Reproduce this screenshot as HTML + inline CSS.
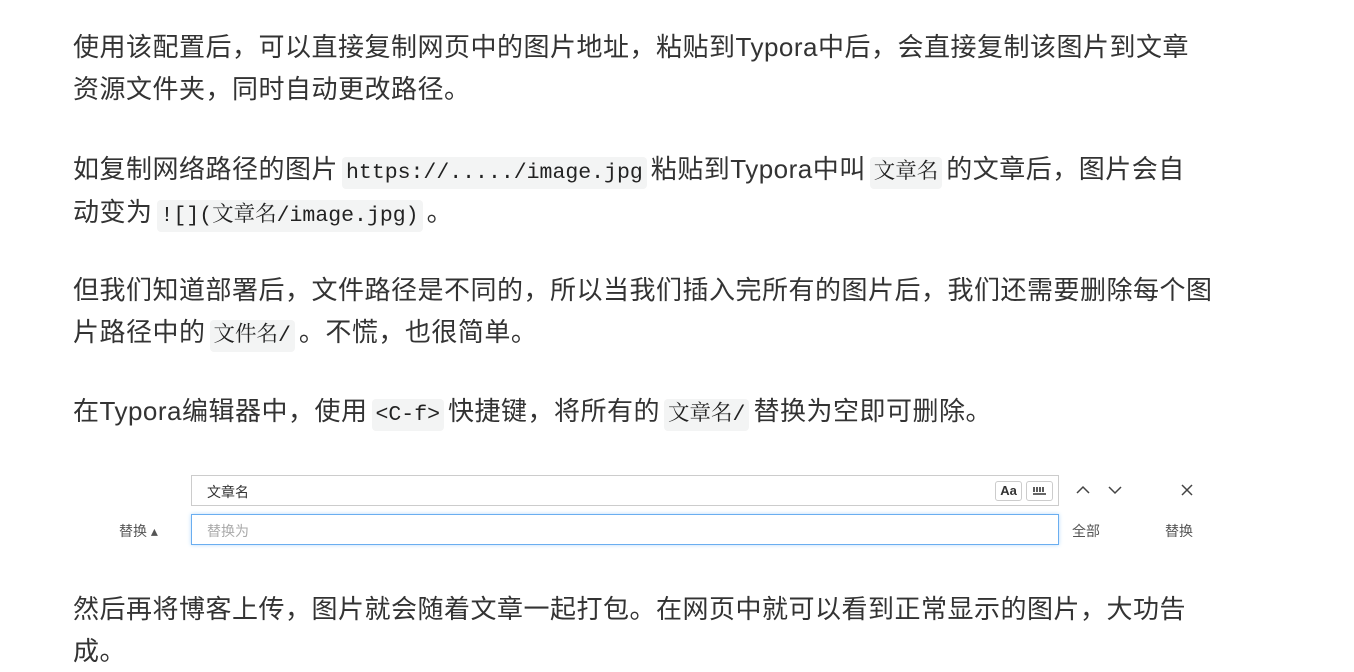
<!DOCTYPE html>
<html><head><meta charset="utf-8">
<style>
body{margin:0;background:#fff;width:1354px;height:656px;overflow:hidden;position:relative;
font-family:"Liberation Sans","Noto Sans CJK SC",sans-serif;color:#333;}
.l{position:absolute;left:73px;font-size:26px;white-space:nowrap;line-height:42px;letter-spacing:0.5px}
code{font-family:"Liberation Mono","Noto Serif CJK SC",monospace;font-size:21.5px;background:#f3f4f4;border-radius:4px;padding:4px 4px;color:#222;letter-spacing:0;margin:0 4px}
.s{position:absolute;font-size:14px;color:#555;white-space:nowrap}
.box{position:absolute;left:191px;width:866px;height:29px;border:1px solid #ccc;background:#fff}
.ic{position:absolute;top:5px;width:25px;height:18px;border:1px solid #ccc;border-radius:3px;font-size:13px;text-align:center;line-height:18px;color:#333;font-weight:bold}
</style></head><body>
<div class="l" style="top:26px">使用该配置后，可以直接复制网页中的图片地址，粘贴到Typora中后，会直接复制该图片到文章</div>
<div class="l" style="top:68px">资源文件夹，同时自动更改路径。</div>
<div class="l" style="top:148px">如复制网络路径的图片<code>https://...../image.jpg</code>粘贴到Typora中叫<code>文章名</code>的文章后，图片会自</div>
<div class="l" style="top:191px">动变为<code>![](文章名/image.jpg)</code>。</div>
<div class="l" style="top:269px">但我们知道部署后，文件路径是不同的，所以当我们插入完所有的图片后，我们还需要删除每个图</div>
<div class="l" style="top:311px">片路径中的<code>文件名/</code>。不慌，也很简单。</div>
<div class="l" style="top:390px">在Typora编辑器中，使用<code>&lt;C-f&gt;</code>快捷键，将所有的<code>文章名/</code>替换为空即可删除。</div>

<div class="box" style="top:475px"><span class="s" style="left:15px;top:6px;color:#333">文章名</span>
<div class="ic" style="left:803px">Aa</div>
<div class="ic" style="left:834px"><svg width="25" height="18"><path d="M7 5v5M10 5v5M13 5v5M16 5v5M6 12h13" stroke="#333" stroke-width="1.6" fill="none"/></svg></div></div>
<div class="box" style="top:514px;border-color:#6aaef0;box-shadow:0 0 4px #b8dcfb"><span class="s" style="left:15px;top:6px;color:#aaa">替换为</span></div>
<span class="s" style="left:119px;top:521px">替换 ▴</span>
<svg style="position:absolute;left:1076px;top:485px" width="14" height="10"><path d="M1 8L7 2L13 8" stroke="#444" stroke-width="1.5" fill="none"/></svg>
<svg style="position:absolute;left:1108px;top:485px" width="14" height="10"><path d="M1 2L7 8L13 2" stroke="#444" stroke-width="1.5" fill="none"/></svg>
<svg style="position:absolute;left:1181px;top:484px" width="12" height="12"><path d="M1 1L11 11M11 1L1 11" stroke="#444" stroke-width="1.5"/></svg>
<span class="s" style="left:1072px;top:521px">全部</span>
<span class="s" style="left:1165px;top:521px">替换</span>

<div class="l" style="top:588px">然后再将博客上传，图片就会随着文章一起打包。在网页中就可以看到正常显示的图片，大功告</div>
<div class="l" style="top:630px">成。</div>
</body></html>
